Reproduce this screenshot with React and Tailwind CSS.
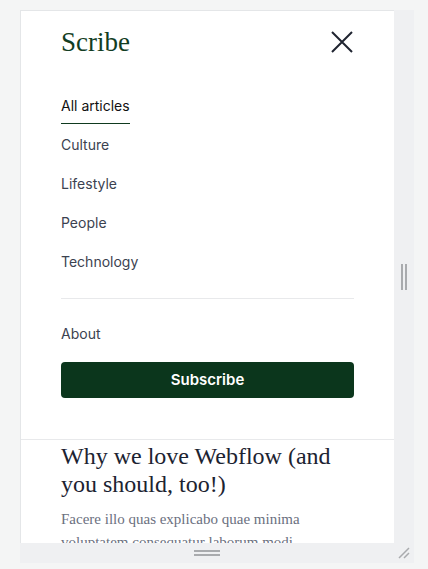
import React from 'react';

const navItems = ['Culture', 'Lifestyle', 'People', 'Technology'];

const serif = "font-['Liberation_Serif',serif]";
const sans = "font-['Inter','Noto_Sans',sans-serif]";

export default function App() {
  return (
    <div className="w-[428px] h-[569px] bg-[#f4f5f5] pt-[10px] pl-[20px] overflow-hidden">
      <div className="grid grid-cols-[374px_20px] grid-rows-[533px_20px] w-[394px]">
        {/* Preview panel */}
        <div className="bg-white border-t border-l border-[#e4e6e8] overflow-hidden flex flex-col">
          <div className="px-10 pt-[15px]">
            <div className="flex items-center justify-between h-[32px]">
              <span className={`${serif} text-[27px] leading-none text-[#123d23]`}>Scribe</span>
              <svg width="22" height="22" viewBox="0 0 22 22" className="text-[#1f2430] mr-[1px]">
                <path d="M1 1L21 21M21 1L1 21" stroke="currentColor" strokeWidth="2" fill="none" />
              </svg>
            </div>

            <nav className={`${sans} text-[14px] mt-[37px]`}>
              <div className="inline-block text-[#111] pb-[7px] border-b border-[#0f3a1f]">All articles</div>
              <ul className="mt-[1px] text-[#3b4250]">
                {navItems.map((item) => (
                  <li key={item} className="h-[39px] flex items-center">{item}</li>
                ))}
              </ul>
              <div className="border-t border-[#e8e9eb] mt-[17px]" />
              <div className="mt-[26px] mb-[19px] leading-[18px] text-[#3b4250]">About</div>
              <button className="w-full h-[36px] rounded-[4px] bg-[#0b361c] text-white font-semibold text-[15px]">
                Subscribe
              </button>
            </nav>
          </div>

          <div className="border-t border-[#e8e9eb] mt-[41px] px-10 pt-[2px]">
            <h2 className={`${serif} text-[24px] leading-[28px] text-[#1c2331]`}>
              Why we love Webflow (and you should, too!)
            </h2>
            <p className={`${serif} text-[15px] leading-[23px] text-[#6b7080] mt-[10px]`}>
              Facere illo quas explicabo quae minima voluptatem consequatur laborum modi.
            </p>
          </div>
        </div>

        {/* Right resize strip */}
        <div className="bg-[#eff0f2] flex items-center justify-center">
          <div className="flex gap-[2px] h-[26px]">
            <div className="w-[2px] bg-[#a9abae]" />
            <div className="w-[2px] bg-[#a9abae]" />
          </div>
        </div>

        {/* Bottom resize strip */}
        <div className="bg-[#eff0f2] flex items-center justify-center">
          <div className="flex flex-col gap-[2px] w-[26px]">
            <div className="h-[2px] bg-[#a9abae]" />
            <div className="h-[2px] bg-[#a9abae]" />
          </div>
        </div>

        {/* Corner */}
        <div className="bg-[#eff0f2] flex items-center justify-center">
          <svg width="14" height="14" viewBox="0 0 14 14">
            <path d="M2 12L12 2M7 12L12 7" stroke="#a9abae" strokeWidth="1.5" />
          </svg>
        </div>
      </div>
    </div>
  );
}
